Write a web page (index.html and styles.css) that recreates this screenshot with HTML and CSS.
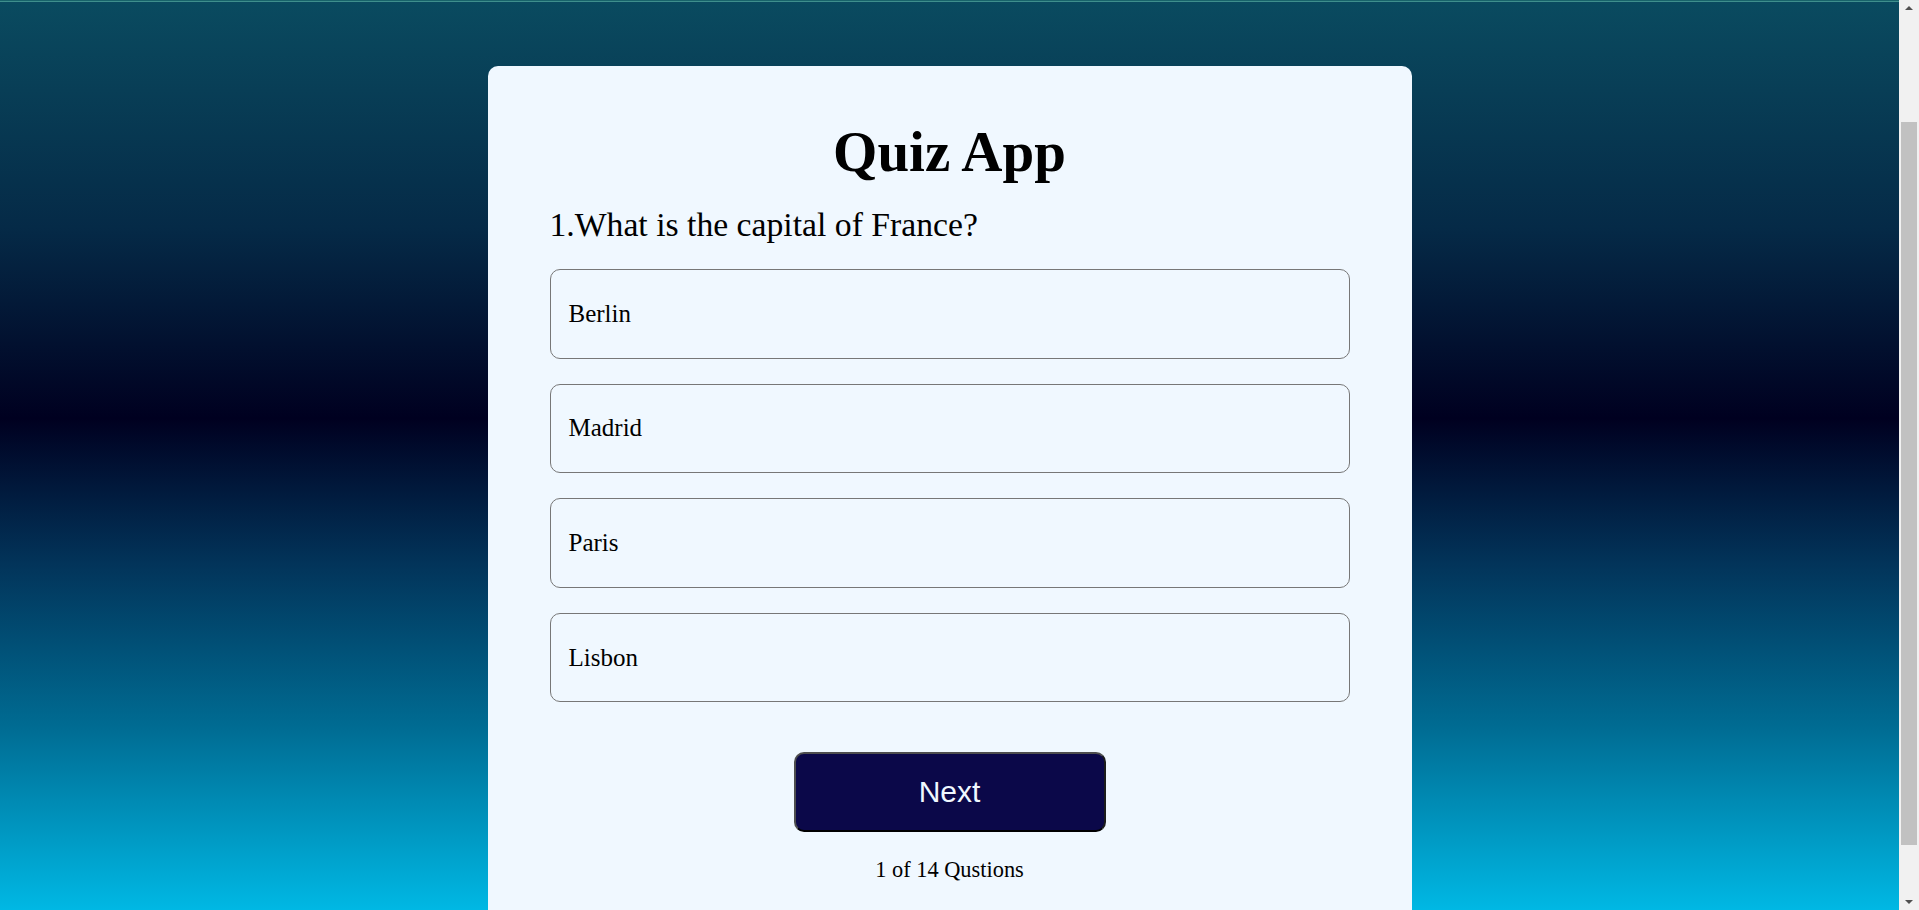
FILE: index.html
```html
<!DOCTYPE html>
<html lang="en">
<head>
<meta charset="utf-8">
<title>Quiz App</title>
<link rel="stylesheet" href="styles.css">
</head>
<body>
  <div class="stage">
    <main class="card">
      <h1 class="title">Quiz App</h1>
      <h2 class="question">1.What is the capital of France?</h2>
      <div class="options">
        <button class="option">Berlin</button>
        <button class="option">Madrid</button>
        <button class="option">Paris</button>
        <button class="option">Lisbon</button>
      </div>
      <button class="next">Next</button>
      <p class="progress">1 of 14 Qustions</p>
    </main>
  </div>
  <div class="scrollbar" aria-hidden="true">
    <div class="sb-btn">
      <svg width="20" height="17" viewBox="0 0 20 17"><path d="M6 10h8l-4-4z" fill="#505050"/></svg>
    </div>
    <div class="sb-track"><div class="sb-thumb"></div></div>
    <div class="sb-btn">
      <svg width="20" height="17" viewBox="0 0 20 17"><path d="M6 7h8l-4 4z" fill="#505050"/></svg>
    </div>
  </div>
</body>
</html>
```
FILE: styles.css
```css
html {
  margin: 0;
  padding: 0;
  height: 100%;
  font-family: "Liberation Serif", "Times New Roman", serif;
}

body {
  margin: 0;
  height: 100%;
  display: flex;
  overflow: hidden;
}

.stage {
  flex: 1;
  min-width: 0;
  overflow: hidden;
  padding-top: 66px;
  background:
    linear-gradient(to bottom, #18636a 0, #18636a 1px, #3f8f8d 1px, #3f8f8d 2px, transparent 2px),
    linear-gradient(to bottom, #0a4b60 0%, #052a47 25%, #000020 46%, #02345a 62%, #006c93 80%, #00b8e4 100%);
}

.scrollbar {
  width: 20px;
  flex: none;
  display: flex;
  flex-direction: column;
  background: #f1f1f1;
}

.sb-btn {
  height: 17px;
  display: flex;
}

.sb-track {
  flex: 1;
  display: flex;
  flex-direction: column;
  padding: 105px 2px 48px;
}

.sb-thumb {
  flex: 1;
  background: #c1c1c1;
}

.card {
  box-sizing: border-box;
  width: 924px;
  margin: 0 auto;
  padding: 55px 62px 150px;
  background: #f0f8ff;
  border-radius: 10px;
  display: flex;
  flex-direction: column;
}

.title {
  margin: 0;
  font-size: 57px;
  line-height: 62px;
  font-weight: bold;
  text-align: center;
  color: #000;
}

.question {
  margin: 23px 0 0;
  font-size: 33.7px;
  font-weight: normal;
  line-height: 37px;
  color: #000;
}

.options {
  margin-top: 26px;
  display: flex;
  flex-direction: column;
  gap: 25px;
}

.option {
  box-sizing: border-box;
  width: 100%;
  height: 89.6px;
  padding: 0 18px;
  text-align: left;
  font-family: "Liberation Serif", "Times New Roman", serif;
  font-size: 25px;
  color: #000;
  background: #f0f8ff;
  border: 1px solid #777777;
  border-radius: 10px;
}

.next {
  align-self: center;
  box-sizing: border-box;
  width: 312px;
  height: 80px;
  margin-top: 50px;
  font-family: "Liberation Sans", Arial, sans-serif;
  font-size: 30px;
  color: #f0f8ff;
  background: #0b0849;
  border: 2px solid;
  border-color: #4e4e4e #1c1c1c #000 #4e4e4e;
  border-radius: 10px;
}

.progress {
  margin: 25px 0 0;
  text-align: center;
  font-size: 22.4px;
  line-height: 25px;
  color: #000;
}
```
